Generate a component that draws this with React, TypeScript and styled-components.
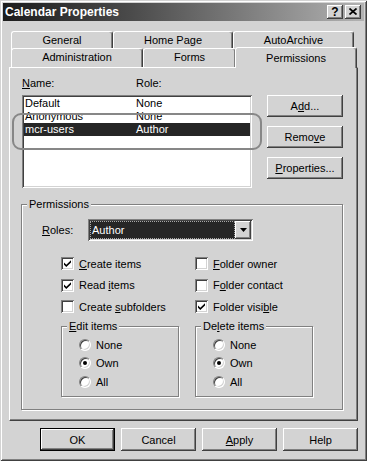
import React from "react";
import styled, { createGlobalStyle } from "styled-components";

const FACE = "#d3d3d3";

const raised = `box-shadow: inset -1px -1px #404040, inset 1px 1px #fff, inset -2px -2px #808080, inset 2px 2px ${FACE};`;
const sunken = `box-shadow: inset 1px 1px #808080, inset -1px -1px #fff, inset 2px 2px #404040, inset -2px -2px ${FACE};`;

const GlobalStyle = createGlobalStyle`
  html, body { margin: 0; padding: 0; background: ${FACE}; }
  body {
    font-family: "Liberation Sans", Arial, sans-serif;
    font-size: 11px;
    color: #000;
  }
  * { box-sizing: border-box; }
`;

const Window = styled.div`
  width: 367px;
  height: 461px;
  padding: 3px;
  display: flex;
  flex-direction: column;
  background: ${FACE};
  box-shadow: inset 1px 1px ${FACE}, inset -1px -1px #404040, inset 2px 2px #fff, inset -2px -2px #808080;
`;

const TitleBar = styled.div`
  height: 18px;
  display: flex;
  align-items: center;
  justify-content: space-between;
  padding: 0 3px 0 2px;
  background: linear-gradient(to right, #1c1c1c 0%, #4a4a4a 35%, #b2b2b2 100%);
`;

const Title = styled.span`
  color: #fff;
  font-weight: bold;
  font-size: 12px;
`;

const CaptionButtons = styled.div`
  display: flex;
  gap: 2px;
`;

const CaptionButton = styled.div`
  width: 16px;
  height: 14px;
  background: ${FACE};
  ${raised}
  display: flex;
  align-items: center;
  justify-content: center;
  font-weight: bold;
  font-size: 12px;
  line-height: 1;
  padding-bottom: 1px;
`;

const Body = styled.div`
  flex: 1;
  display: flex;
  flex-direction: column;
  padding: 10px 6px 0 6px;
`;

const TabRow = styled.div<{ $second?: boolean }>`
  display: flex;
  padding-left: 2px;
  height: ${(p) => (p.$second ? 17 : 19)}px;
  align-items: flex-end;
`;

const Tab = styled.div<{ $w: number; $active?: boolean }>`
  width: ${(p) => p.$w}px;
  height: ${(p) => (p.$active ? 21 : 19)}px;
  flex: none;
  background: ${FACE};
  border-top: 1px solid #fff;
  border-left: 1px solid #fff;
  border-right: 1px solid #404040;
  border-radius: 3px 3px 0 0;
  box-shadow: inset -1px 0 #808080;
  text-align: center;
  line-height: 13px;
  padding-top: ${(p) => (p.$active ? 4 : 2)}px;
  ${(p) => (p.$active ? "margin-left: -1px; margin-bottom: -1px; position: relative; z-index: 1;" : "")}
`;

const Panel = styled.div`
  width: 349px;
  height: 354px;
  border-top: 1px solid #fff;
  border-left: 1px solid #fff;
  border-right: 1px solid #404040;
  border-bottom: 1px solid #404040;
  box-shadow: inset -1px -1px #808080;
  padding: 9px 12px 0 12px;
  display: flex;
  flex-direction: column;
`;

const TopSection = styled.div`
  display: flex;
  position: relative;
`;

const ListColumn = styled.div`
  width: 230px;
`;

const ColumnHeads = styled.div`
  display: grid;
  grid-template-columns: 114px 1fr;
  height: 18px;
  line-height: 13px;
`;

const ListBox = styled.div`
  height: 93px;
  background: #fff;
  ${sunken}
  padding: 2px;
`;

const ListRow = styled.div<{ $selected?: boolean }>`
  display: grid;
  grid-template-columns: 111px 1fr;
  height: 13px;
  line-height: 13px;
  padding-left: 1px;
  background: ${(p) => (p.$selected ? "#262626" : "transparent")};
  color: ${(p) => (p.$selected ? "#fff" : "#000")};
`;

const Annotation = styled.div`
  position: absolute;
  left: -10px;
  top: 36px;
  width: 250px;
  height: 37px;
  border: 2px solid #878787;
  border-radius: 9px;
  pointer-events: none;
`;

const ButtonColumn = styled.div`
  display: flex;
  flex-direction: column;
  gap: 9px;
  margin-left: 15px;
  padding-top: 18px;
`;

const PushButton = styled.div<{ $w: number; $h: number; $default?: boolean }>`
  width: ${(p) => p.$w}px;
  height: ${(p) => p.$h}px;
  background: ${FACE};
  display: flex;
  align-items: center;
  justify-content: center;
  ${(p) =>
    p.$default
      ? `box-shadow: inset 0 0 0 1px #000, inset -2px -2px #404040, inset 2px 2px #fff, inset -3px -3px #808080;`
      : raised}
`;

const Key = styled.span`
  text-decoration: underline;
`;

const Group = styled.fieldset<{ $w: number; $pad: string }>`
  margin: 0;
  width: ${(p) => p.$w}px;
  min-inline-size: 0;
  border: 1px solid #808080;
  box-shadow: 1px 1px 0 #fff, inset 1px 1px 0 #fff;
  padding: ${(p) => p.$pad};
`;

const Legend = styled.legend<{ $shift: number }>`
  padding: 0 2px;
  margin-left: ${(p) => p.$shift}px;
  line-height: 13px;
  background: ${FACE};
`;

const PermGroup = styled(Group)`
  margin-top: 10px;
  margin-left: -1px;
`;

const RolesRow = styled.div`
  display: flex;
  align-items: center;
  margin-top: 8px;
`;

const RolesLabel = styled.span`
  width: 46px;
`;

const Combo = styled.div`
  width: 165px;
  height: 22px;
  background: #fff;
  ${sunken}
  padding: 2px;
  display: flex;
`;

const ComboValue = styled.div`
  flex: 1;
  background: #262626;
  color: #fff;
  border: 1px dotted #a8a8a8;
  line-height: 16px;
  padding-left: 1px;
`;

const ComboArrow = styled.div`
  width: 16px;
  height: 18px;
  background: ${FACE};
  ${raised}
  display: flex;
  align-items: center;
  justify-content: center;
`;

const CheckGrid = styled.div`
  display: grid;
  grid-template-columns: 134px 1fr;
  grid-auto-rows: 21.5px;
  margin: 12px 0 0 19px;
`;

const Item = styled.label`
  display: flex;
  align-items: center;
`;

const CheckBox = styled.span`
  width: 13px;
  height: 13px;
  flex: none;
  background: #fff;
  ${sunken}
  padding: 2px;
  margin-right: 5px;
  display: flex;
`;

const SubGroups = styled.div`
  display: flex;
  gap: 16px;
  margin: 2px 0 0 19px;
`;

const RadioList = styled.div`
  display: flex;
  flex-direction: column;
`;

const RadioItem = styled(Item)`
  height: 18.5px;
`;

const Radio = styled.span`
  width: 12px;
  height: 12px;
  flex: none;
  border-radius: 50%;
  background: #fff;
  border: 1px solid;
  border-color: #808080 #fff #fff #808080;
  box-shadow: inset 1px 1px #404040, inset -1px -1px ${FACE};
  margin-right: 5px;
  display: flex;
  align-items: center;
  justify-content: center;
`;

const RadioDot = styled.span`
  width: 4px;
  height: 4px;
  border-radius: 50%;
  background: #000;
`;

const Footer = styled.div`
  display: flex;
  justify-content: flex-end;
  gap: 6px;
  margin-top: 7px;
`;

const CheckMark = () => (
  <svg width="9" height="9" viewBox="0 0 9 9">
    <path d="M1 3.5 L3.3 5.8 L8 1.2 V3.4 L3.3 8 L1 5.7 Z" fill="#000" />
  </svg>
);

function Check({ on, children }: { on?: boolean; children: React.ReactNode }) {
  return (
    <Item>
      <CheckBox>{on && <CheckMark />}</CheckBox>
      <span>{children}</span>
    </Item>
  );
}

function RadioOpt({ on, children }: { on?: boolean; children: React.ReactNode }) {
  return (
    <RadioItem>
      <Radio>{on && <RadioDot />}</Radio>
      <span>{children}</span>
    </RadioItem>
  );
}

const members = [
  { name: "Default", role: "None" },
  { name: "Anonymous", role: "None" },
  { name: "mcr-users", role: "Author", selected: true },
];

export default function App() {
  return (
    <>
      <GlobalStyle />
      <Window>
        <TitleBar>
          <Title>Calendar Properties</Title>
          <CaptionButtons>
            <CaptionButton>?</CaptionButton>
            <CaptionButton>
              <svg width="8" height="7" viewBox="0 0 8 7">
                <path d="M0.5 0.5 L7.5 6.5 M7.5 0.5 L0.5 6.5" stroke="#000" strokeWidth="1.7" />
              </svg>
            </CaptionButton>
          </CaptionButtons>
        </TitleBar>

        <Body>
          <TabRow>
            <Tab $w={102}>General</Tab>
            <Tab $w={120}>Home Page</Tab>
            <Tab $w={121}>AutoArchive</Tab>
          </TabRow>
          <TabRow $second>
            <Tab $w={132}>Administration</Tab>
            <Tab $w={93}>Forms</Tab>
            <Tab $w={122} $active>Permissions</Tab>
          </TabRow>

          <Panel>
            <TopSection>
              <ListColumn>
                <ColumnHeads>
                  <span><Key>N</Key>ame:</span>
                  <span>Role:</span>
                </ColumnHeads>
                <ListBox>
                  {members.map((m) => (
                    <ListRow key={m.name} $selected={m.selected}>
                      <span>{m.name}</span>
                      <span>{m.role}</span>
                    </ListRow>
                  ))}
                </ListBox>
              </ListColumn>
              <ButtonColumn>
                <PushButton $w={76} $h={22}>A<Key>d</Key>d...</PushButton>
                <PushButton $w={76} $h={22}>Remo<Key>v</Key>e</PushButton>
                <PushButton $w={76} $h={22}><Key>P</Key>roperties...</PushButton>
              </ButtonColumn>
              <Annotation />
            </TopSection>

            <PermGroup $w={322} $pad="0 0 12px 20px">
              <Legend $shift={-15}>Permissions</Legend>
              <RolesRow>
                <RolesLabel><Key>R</Key>oles:</RolesLabel>
                <Combo>
                  <ComboValue>Author</ComboValue>
                  <ComboArrow>
                    <svg width="7" height="4" viewBox="0 0 7 4">
                      <polygon points="0,0 7,0 3.5,4" fill="#000" />
                    </svg>
                  </ComboArrow>
                </Combo>
              </RolesRow>

              <CheckGrid>
                <Check on><Key>C</Key>reate items</Check>
                <Check><Key>F</Key>older owner</Check>
                <Check on>Read <Key>i</Key>tems</Check>
                <Check>F<Key>o</Key>lder contact</Check>
                <Check>Create <Key>s</Key>ubfolders</Check>
                <Check on>Folder visi<Key>b</Key>le</Check>
              </CheckGrid>

              <SubGroups>
                <Group $w={118} $pad="3px 0 5px 17px">
                  <Legend $shift={-12}><Key>E</Key>dit items</Legend>
                  <RadioList>
                    <RadioOpt>None</RadioOpt>
                    <RadioOpt on>Own</RadioOpt>
                    <RadioOpt>All</RadioOpt>
                  </RadioList>
                </Group>
                <Group $w={118} $pad="3px 0 5px 17px">
                  <Legend $shift={-12}>De<Key>l</Key>ete items</Legend>
                  <RadioList>
                    <RadioOpt>None</RadioOpt>
                    <RadioOpt on>Own</RadioOpt>
                    <RadioOpt>All</RadioOpt>
                  </RadioList>
                </Group>
              </SubGroups>
            </PermGroup>
          </Panel>

          <Footer>
            <PushButton $w={75} $h={23} $default>OK</PushButton>
            <PushButton $w={75} $h={23}>Cancel</PushButton>
            <PushButton $w={75} $h={23}><Key>A</Key>pply</PushButton>
            <PushButton $w={75} $h={23}>Help</PushButton>
          </Footer>
        </Body>
      </Window>
    </>
  );
}
